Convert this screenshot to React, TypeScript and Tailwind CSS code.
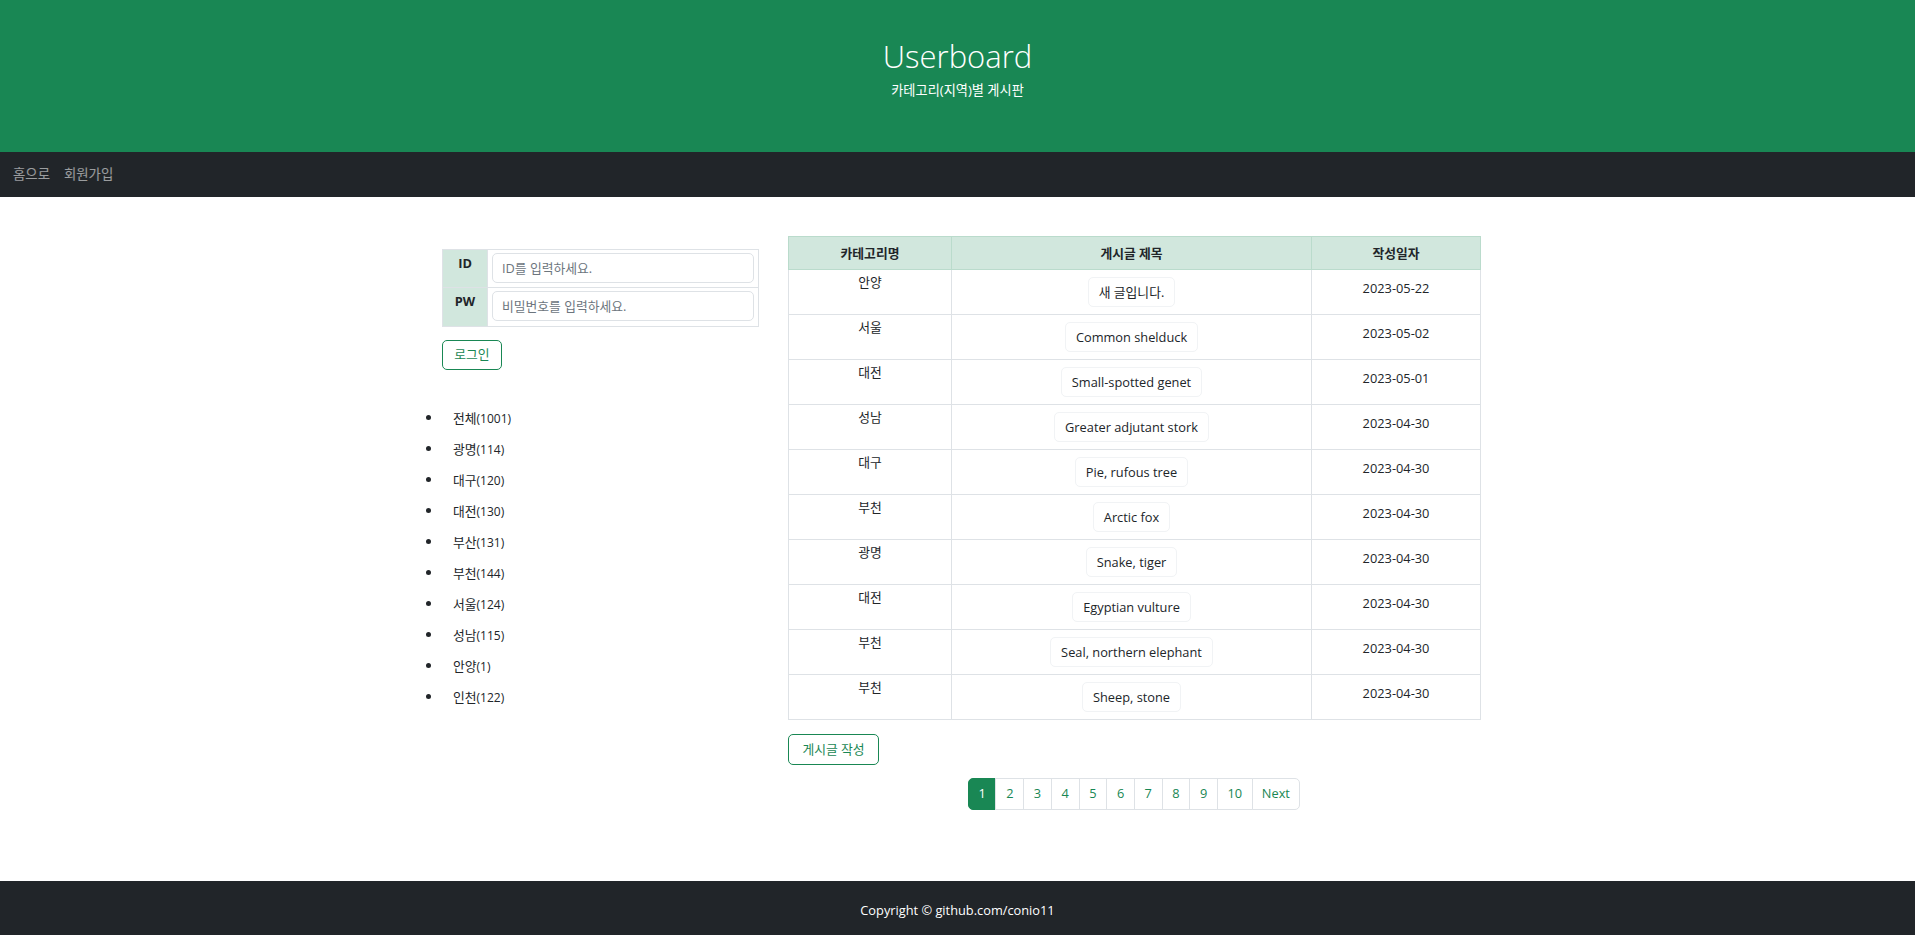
const posts = [
  ['안양', '새 글입니다.', '2023-05-22'],
  ['서울', 'Common shelduck', '2023-05-02'],
  ['대전', 'Small-spotted genet', '2023-05-01'],
  ['성남', 'Greater adjutant stork', '2023-04-30'],
  ['대구', 'Pie, rufous tree', '2023-04-30'],
  ['부천', 'Arctic fox', '2023-04-30'],
  ['광명', 'Snake, tiger', '2023-04-30'],
  ['대전', 'Egyptian vulture', '2023-04-30'],
  ['부천', 'Seal, northern elephant', '2023-04-30'],
  ['부천', 'Sheep, stone', '2023-04-30'],
];

const categories = [
  ['전체', '1001'],
  ['광명', '114'],
  ['대구', '120'],
  ['대전', '130'],
  ['부산', '131'],
  ['부천', '144'],
  ['서울', '124'],
  ['성남', '115'],
  ['안양', '1'],
  ['인천', '122'],
];

const pages = ['1', '2', '3', '4', '5', '6', '7', '8', '9', '10', 'Next'];

const LoginBox = () => {
  return (
    <div className="mt-[13px]">
      <div className="border border-[#dee2e6]">
        {/* ID / PW rows */}
        {[
          ['ID', 'ID를 입력하세요.'],
          ['PW', '비밀번호를 입력하세요.'],
        ].map(([label, hint], i) => (
          <div key={label} className={`flex h-[38px] ${i === 0 ? 'border-b border-[#dee2e6]' : ''}`}>
            <div className="w-[45px] shrink-0 bg-[#d1e7dd] border-r border-[#dee2e6] pt-[4px] text-center font-bold leading-[19px] text-[#212529]">
              {label}
            </div>
            <div className="flex-1 px-[4px] pt-[3px]">
              <input
                placeholder={hint}
                className="h-[30px] w-full rounded-[5px] border border-[#dee2e6] bg-white px-[9px] text-[12.8px] text-[#212529] outline-none placeholder:text-[#6c757d]"
              />
            </div>
          </div>
        ))}
      </div>
      <button className="mt-[13px] h-[30px] w-[60px] rounded-[5px] border border-[#198754] bg-white text-[#198754]">
        로그인
      </button>
    </div>
  );
};

export default function App() {
  return (
    <div className="min-h-screen bg-white text-[12.8px] text-[#212529] font-[family-name:'Segoe_UI','Open_Sans','Noto_Sans_CJK_KR',sans-serif]">
      {/* Header */}
      <header className="h-[152px] bg-[#198754] pt-[36px] text-center text-white">
        <h1 className="text-[31px] font-light leading-[40px]">Userboard</h1>
        <p className="mt-[4px] text-[13.2px] leading-[20px]">카테고리(지역)별 게시판</p>
      </header>

      {/* Nav */}
      <nav className="flex h-[45px] items-center gap-[14px] bg-[#212529] px-[13px] text-[13.4px] text-white/55">
        <a>홈으로</a>
        <a>회원가입</a>
      </nav>

      {/* Main */}
      <main className="mx-auto flex w-[1045px] pl-[7px] pt-[39px]">
        <div className="w-[317px] shrink-0">
          <LoginBox />

          <ul className="mt-[33px]">
            {categories.map(([name, count]) => (
              <li key={name} className="relative flex h-[31px] items-center pl-[11px]">
                <span className="absolute left-[-16px] top-[12px] h-[5px] w-[5px] rounded-full bg-[#212529]" />
                <span>{name}</span>
                <span className="text-[12px]">({count})</span>
              </li>
            ))}
          </ul>
        </div>

        <div className="ml-auto w-[692px]">
          <table className="w-[692px] table-fixed border-collapse">
            <colgroup>
              <col className="w-[163px]" />
              <col className="w-[360px]" />
              <col className="w-[169px]" />
            </colgroup>
            <thead>
              <tr className="h-[33px] bg-[#d1e7dd]">
                <th className="border border-[#badbcc] pt-[2px] font-bold">카테고리명</th>
                <th className="border border-[#badbcc] pt-[2px] font-bold">게시글 제목</th>
                <th className="border border-[#badbcc] pt-[2px] font-bold">작성일자</th>
              </tr>
            </thead>
            <tbody>
              {posts.map(([cat, title, date], i) => (
                <tr key={i} className="h-[45px]">
                  <td className="border border-[#dee2e6] pt-[3px] text-center align-top leading-[19px]">{cat}</td>
                  <td className="border border-[#dee2e6] pt-[7px] text-center align-top">
                    <button className="h-[30px] rounded-[5px] border border-[#f1f3f5] bg-white px-[10px] leading-[19px]">
                      {title}
                    </button>
                  </td>
                  <td className="border border-[#dee2e6] pt-[9px] text-center align-top leading-[19px]">{date}</td>
                </tr>
              ))}
            </tbody>
          </table>

          <button className="mt-[14px] h-[31px] w-[91px] rounded-[5px] border border-[#198754] bg-white text-[#198754]">
            게시글 작성
          </button>

          {/* Pagination */}
          <div className="mt-[13px] flex justify-center">
            <div className="flex h-[32px]">
              {pages.map((p, i) => (
                <a
                  key={p}
                  className={`flex h-[32px] items-center justify-center border ${
                    i === 0
                      ? 'rounded-l-[5px] border-[#198754] bg-[#198754] text-white'
                      : '-ml-px border-[#dee2e6] bg-white text-[#198754]'
                  } ${p === 'Next' ? 'w-[48.7px] rounded-r-[5px]' : p === '10' ? 'w-[35.6px]' : 'w-[28.7px]'}`}
                >
                  {p}
                </a>
              ))}
            </div>
          </div>
        </div>
      </main>

      {/* Footer */}
      <footer className="mt-[71px] bg-[#212529] py-[19px] text-center leading-[20px] text-white">
        Copyright © github.com/conio11
      </footer>
    </div>
  );
}
